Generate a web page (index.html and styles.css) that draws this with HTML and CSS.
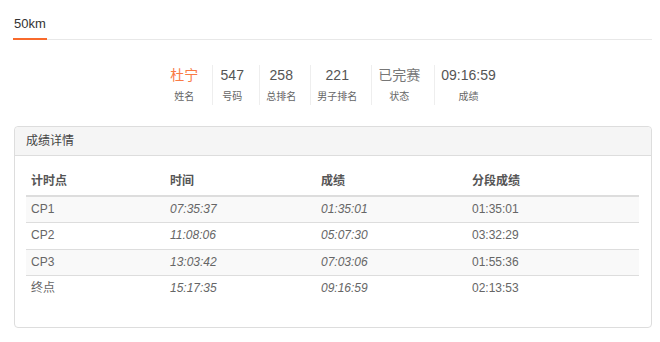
FILE: index.html
```html
<!DOCTYPE html>
<html lang="zh-CN">
<head>
<meta charset="utf-8">
<title>50km 成绩</title>
<link rel="stylesheet" href="styles.css">
</head>
<body>
<div class="page">
  <div class="tabs">
    <span class="tab active">50km</span>
  </div>

  <div class="stats">
    <div class="stat">
      <div class="stat-value name">杜宁</div>
      <div class="stat-label">姓名</div>
    </div>
    <div class="stat">
      <div class="stat-value">547</div>
      <div class="stat-label">号码</div>
    </div>
    <div class="stat">
      <div class="stat-value">258</div>
      <div class="stat-label">总排名</div>
    </div>
    <div class="stat">
      <div class="stat-value">221</div>
      <div class="stat-label">男子排名</div>
    </div>
    <div class="stat">
      <div class="stat-value status">已完赛</div>
      <div class="stat-label">状态</div>
    </div>
    <div class="stat">
      <div class="stat-value">09:16:59</div>
      <div class="stat-label">成绩</div>
    </div>
  </div>

  <div class="panel">
    <div class="panel-head">成绩详情</div>
    <div class="panel-body">
      <table class="results">
        <colgroup>
          <col class="c1"><col class="c2"><col class="c3"><col class="c4">
        </colgroup>
        <thead>
          <tr><th>计时点</th><th>时间</th><th>成绩</th><th>分段成绩</th></tr>
        </thead>
        <tbody>
          <tr><td>CP1</td><td class="t">07:35:37</td><td class="t">01:35:01</td><td>01:35:01</td></tr>
          <tr><td>CP2</td><td class="t">11:08:06</td><td class="t">05:07:30</td><td>03:32:29</td></tr>
          <tr><td>CP3</td><td class="t">13:03:42</td><td class="t">07:03:06</td><td>01:55:36</td></tr>
          <tr><td>终点</td><td class="t">15:17:35</td><td class="t">09:16:59</td><td>02:13:53</td></tr>
        </tbody>
      </table>
    </div>
  </div>
</div>
</body>
</html>
```

FILE: styles.css
```css
html, body {
  margin: 0;
  padding: 0;
  background: #fff;
}

body {
  font-family: "Liberation Sans", "Noto Sans CJK SC", sans-serif;
  font-size: 12px;
  color: #555;
}

.page {
  width: 639px;
  padding-left: 13px;
}

/* tabs */
.tabs {
  display: flex;
  padding-top: 14px;
  border-bottom: 1px solid #e8e8e8;
}

.tab {
  font-size: 13px;
  line-height: 20px;
  color: #333;
  padding: 0 1px 4px;
  margin-bottom: -1px;
}

.tab.active {
  border-bottom: 2px solid #f86a2c;
}

/* stats */
.stats {
  display: flex;
  justify-content: center;
  margin-top: 25px;
  padding-left: 9px;
}

.stat {
  padding: 0 14px 0 6px;
  min-width: 26px;
  text-align: center;
  border-left: 1px solid #eeeeee;
  height: 40px;
}

.stat:first-child {
  border-left: 0;
}

.stat-value {
  font-size: 14px;
  line-height: 20px;
  color: #555;
}

.stat-value.name {
  color: #f97a45;
}

.stat-value.status {
  color: #777;
}

.stat-label {
  margin-top: 3px;
  font-size: 10px;
  line-height: 17px;
  color: #666;
}

/* panel */
.panel {
  margin: 21px 0 0 1px;
  border: 1px solid #dddddd;
  border-radius: 4px;
}

.panel-head {
  background: #f5f5f5;
  line-height: 28px;
  padding: 0 11px;
  color: #444;
  border-bottom: 1px solid #dddddd;
  border-radius: 4px 4px 0 0;
}

.panel-body {
  padding: 13px 12px 25px 11px;
}

/* table */
.results {
  width: 100%;
  border-collapse: collapse;
  border-spacing: 0;
}

.results col.c1 { width: 139px; }
.results col.c2 { width: 151px; }
.results col.c3 { width: 151px; }

.results th {
  text-align: left;
  font-weight: bold;
  color: #555;
  padding: 4px 5px;
  line-height: 17.5px;
  border-bottom: 2px solid #dddddd;
}

.results td {
  color: #666;
  padding: 4px 5px;
  line-height: 17.5px;
  border-top: 1px solid #dddddd;
}

.results tbody tr:first-child td {
  border-top: 0;
}

.results tbody tr:nth-child(odd) td {
  background: #f9f9f9;
}

.results td.t {
  font-style: italic;
}
```
